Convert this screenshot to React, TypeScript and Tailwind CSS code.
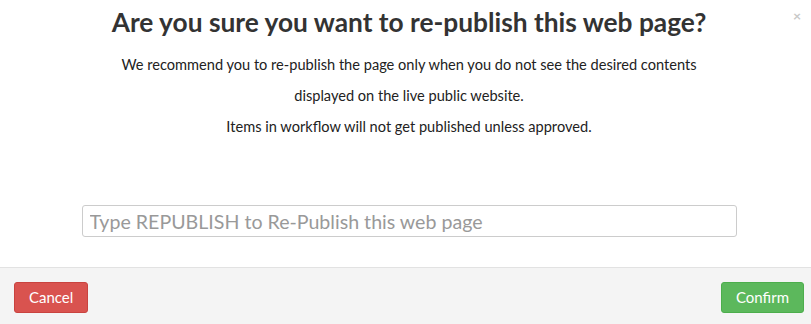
export default function App() {
    return (
        <div className="w-[811px] h-[324px] bg-white flex flex-col font-['Lato',sans-serif] text-[#333]">
            <div className="relative flex-1 flex flex-col items-center pl-[7px]">
                <button className="absolute right-[10px] top-[9px] text-[#c8c8c8] text-[14px] font-bold leading-none">×</button>
                <h2 className="mt-[6px] text-[26.3px] font-bold leading-[32px] text-[#333]">Are you sure you want to re-publish this web page?</h2>
                <div className="mt-[12px] text-[14.6px] leading-[31px] text-center text-[#222]">
                    <p className="-mt-[1px]">We recommend you to re-publish the page only when you do not see the desired contents</p>
                    <p>displayed on the live public website.</p>
                    <p>Items in workflow will not get published unless approved.</p>
                </div>
                <input
                    type="text"
                    placeholder="Type REPUBLISH to Re-Publish this web page"
                    className="mt-[63px] w-[655px] h-[32px] px-[7px] text-[19.6px] rounded-[3px] border border-[#ccc] placeholder:text-[#999] focus:outline-none"
                />
            </div>
            <div className="h-[57px] border-t border-[#e2e2e2] bg-[#f4f4f4] flex items-center justify-between pl-[14px] pr-[7px] pt-[3px]">
                <button className="h-[31px] px-[14px] rounded-[3px] bg-[#d9534f] border border-[#c9433f] text-white text-[15px]">Cancel</button>
                <button className="h-[31px] px-[14px] rounded-[3px] bg-[#5cb85c] border border-[#4cae4c] text-white text-[15px]">Confirm</button>
            </div>
        </div>
    );
}
